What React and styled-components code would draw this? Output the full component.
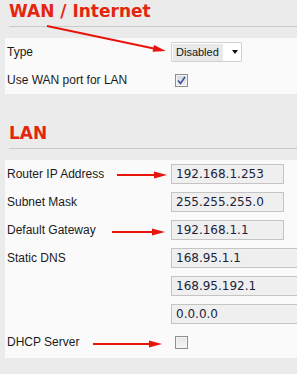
import styled, { createGlobalStyle } from "styled-components"

const GlobalStyle = createGlobalStyle`
    html, body {
        margin: 0;
        padding: 0;
        background: #ebebeb;
        overflow: hidden;
    }
`

const arrows = [
    { x1: 47, y1: 26, x2: 166, y2: 51 },
    { x1: 117, y1: 175, x2: 167, y2: 175 },
    { x1: 112, y1: 232, x2: 165, y2: 232 },
    { x1: 93, y1: 344, x2: 162, y2: 344 },
]

const Arrow = ({ x1, y1, x2, y2 }) => {
    const angle = Math.atan2(y2 - y1, x2 - x1) * 180 / Math.PI
    return (
        <g>
            <line x1={x1} y1={y1} x2={x2 - 10 * Math.cos(angle * Math.PI / 180)} y2={y2 - 10 * Math.sin(angle * Math.PI / 180)} stroke="#e8140c" strokeWidth="2" />
            <polygon points="0,0 -13,-3.5 -13,3.5" fill="#e8140c" transform={`translate(${x2} ${y2}) rotate(${angle})`} />
        </g>
    )
}

const Check = ({ checked }) => (
    <CheckBox $checked={checked}>
        {checked ? (
            <svg width="9" height="9" viewBox="0 0 9 9">
                <path d="M1 4.5 L3.5 7.5 L8 1" fill="none" stroke="#3c4f9e" strokeWidth="1.6" />
            </svg>
        ) : null}
    </CheckBox>
)

const App = () => {
    return (
        <Page>
            <GlobalStyle />

            <Section>
                <Heading>WAN / Internet</Heading>
                <Rule />
                <Panel>
                    <Row>
                        <Label>Type</Label>
                        <Select>
                            <span className="value">Disabled</span>
                            <Caret />
                        </Select>
                    </Row>
                    <Row>
                        <Label>Use WAN port for LAN</Label>
                        <Check checked />
                    </Row>
                </Panel>
            </Section>

            <Section $gap={29}>
                <Heading>LAN</Heading>
                <Rule />
                <Panel $bottom={2}>
                    <Row>
                        <Label>Router IP Address</Label>
                        <Field>192.168.1.253</Field>
                    </Row>
                    <Row>
                        <Label>Subnet Mask</Label>
                        <Field>255.255.255.0</Field>
                    </Row>
                    <Row>
                        <Label>Default Gateway</Label>
                        <Field>192.168.1.1</Field>
                    </Row>
                    <Row>
                        <Label>Static DNS</Label>
                        <Field $wide>168.95.1.1</Field>
                    </Row>
                    <Row>
                        <Label />
                        <Field $wide>168.95.192.1</Field>
                    </Row>
                    <Row>
                        <Label />
                        <Field $wide>0.0.0.0</Field>
                    </Row>
                    <Row>
                        <Label>DHCP Server</Label>
                        <Check />
                    </Row>
                </Panel>
            </Section>

            <Overlay width="297" height="374" viewBox="0 0 297 374">
                {arrows.map((a, i) => <Arrow key={i} {...a} />)}
            </Overlay>
        </Page>
    )
}

export default App

const Page = styled.div`
    position: relative;
    width: 297px;
    height: 374px;
    padding-top: 1px;
    box-sizing: border-box;
    font-family: "Liberation Sans", Arial, sans-serif;
`

const Section = styled.section`
    margin-top: ${props => props.$gap || 0}px;
`

const Heading = styled.h2`
    margin: 0 0 0 9px;
    height: 20px;
    line-height: 20px;
    font-family: "DejaVu Sans", Verdana, sans-serif;
    font-weight: 700;
    font-size: 17px;
    color: #e4260e;
`

const Rule = styled.div`
    margin: 5px 0 0 9px;
    border-top: 1px solid #c9c9c9;
`

const Panel = styled.div`
    margin: 11px 0 0 5px;
    padding-bottom: ${props => props.$bottom || 0}px;
    background: #fafafa;
`

const Row = styled.div`
    display: grid;
    grid-template-columns: 164px 1fr;
    align-items: center;
    height: 28px;
    padding-left: 2px;
`

const Label = styled.div`
    font-size: 12px;
    color: #1a1a1a;
    white-space: nowrap;
`

const Select = styled.div`
    display: flex;
    align-items: center;
    width: 71px;
    height: 20px;
    box-sizing: border-box;
    border: 1px solid #cdd1d8;
    border-radius: 1px;
    background: #fff;
    padding-left: 1px;

    .value {
        font-size: 11px;
        color: #101820;
        background: #e9e9e9;
        padding: 2px 4px 2px 3px;
        line-height: 13px;
    }
`

const Caret = styled.span`
    margin-left: 9px;
    width: 0;
    height: 0;
    border-left: 3.5px solid transparent;
    border-right: 3.5px solid transparent;
    border-top: 4px solid #111;
`

const Field = styled.div`
    width: ${props => props.$wide ? 140 : 113}px;
    height: 20px;
    box-sizing: border-box;
    border: 1px solid #c4c4c4;
    background: #efefef;
    padding-left: 4px;
    font-family: "DejaVu Sans", Verdana, sans-serif;
    font-size: 12px;
    line-height: 18px;
    color: #1b1f3d;
    white-space: nowrap;
`

const CheckBox = styled.span`
    display: flex;
    align-items: center;
    justify-content: center;
    margin-left: 4px;
    width: 13px;
    height: 13px;
    box-sizing: border-box;
    border: 1px solid #8f8f8f;
    background: ${props => props.$checked ? "linear-gradient(#d9d9d9, #eeeeee)" : "linear-gradient(#e4e4e4, #f7f7f7)"};
    box-shadow: inset 0 0 0 1px #f4f4f4;
`

const Overlay = styled.svg`
    position: absolute;
    left: 0;
    top: 0;
    pointer-events: none;
`
